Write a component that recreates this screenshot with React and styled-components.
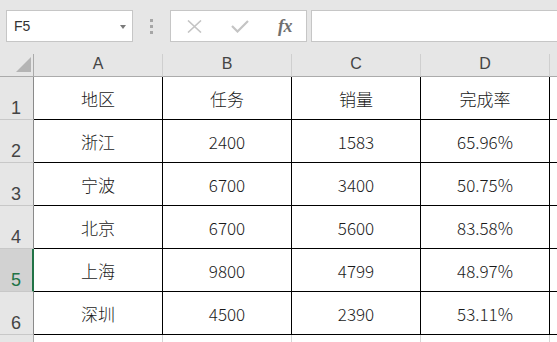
import React from "react";
import styled, { createGlobalStyle } from "styled-components";

const Global = createGlobalStyle`
  html, body { margin: 0; padding: 0; background: #e6e6e6; overflow: hidden; }
  #root { width: 557px; height: 342px; overflow: hidden; }
  * { box-sizing: border-box; }
`;

const Page = styled.div`
  width: 557px;
  height: 342px;
  display: flex;
  flex-direction: column;
  overflow: hidden;
  background: #e6e6e6;
`;

const Toolbar = styled.div`
  height: 54px;
  flex: none;
  display: flex;
  align-items: flex-start;
  padding: 10px 0 0 6px;
  background: #e6e6e6;
`;

const Field = styled.div`
  height: 32px;
  background: #fff;
  border: 1px solid #c6c6c6;
  display: flex;
  align-items: center;
`;

const NameBox = styled(Field)`
  width: 127px;
  padding: 0 6px 0 7px;
  justify-content: space-between;
  font-family: "Liberation Sans", Arial, sans-serif;
  font-size: 14px;
  color: #333;
`;

const Caret = styled.span`
  width: 0;
  height: 0;
  border-left: 3.5px solid transparent;
  border-right: 3.5px solid transparent;
  border-top: 4px solid #7a7a7a;
  margin-top: 1px;
`;

const Grip = styled.div`
  width: 37px;
  height: 32px;
  display: flex;
  flex-direction: column;
  align-items: center;
  justify-content: center;
  gap: 3px;
`;

const Dot = styled.span`
  width: 3px;
  height: 3px;
  background: #a6a6a6;
`;

const FxBox = styled(Field)`
  width: 137px;
  padding: 0 0 0 15px;
`;

const IconSlot = styled.span`
  width: ${(p) => p.$w}px;
  display: flex;
  align-items: center;
  justify-content: center;
`;

const FxText = styled.span`
  font-family: "Liberation Serif", "Times New Roman", serif;
  font-style: italic;
  font-weight: bold;
  font-size: 18px;
  color: #707070;
  letter-spacing: -0.5px;
`;

const FormulaInput = styled(Field)`
  flex: 1;
  margin-left: 4px;
  border-right: none;
`;

const Sheet = styled.div`
  display: grid;
  grid-template-columns: 34px repeat(4, 129px) 1fr;
  grid-template-rows: 23px repeat(6, 43px) 22px;
  background: #fff;
`;

const Corner = styled.div`
  background: #e6e6e6;
  border-right: 1px solid #ababab;
  border-bottom: 1px solid #ababab;
  display: flex;
  align-items: flex-end;
  justify-content: flex-end;
  padding: 0 2px 4px 0;
`;

const ColHead = styled.div`
  background: #e6e6e6;
  border-right: 1px solid #cfcfcf;
  border-bottom: 1px solid #ababab;
  display: flex;
  align-items: center;
  justify-content: center;
  padding-bottom: 2px;
  font-family: "Liberation Sans", Arial, sans-serif;
  font-size: 16px;
  color: #444;
`;

const RowHead = styled.div`
  background: ${(p) => (p.$active ? "#d2d2d2" : "#e6e6e6")};
  color: ${(p) => (p.$active ? "#217346" : "#444")};
  border-right: ${(p) => (p.$active ? "2px solid #217346" : "1px solid #8a8a8a")};
  border-bottom: 1px solid #c8c8c8;
  display: flex;
  align-items: flex-end;
  justify-content: center;
  padding: 0 ${(p) => (p.$active ? "0" : "1px")} 2px 0;
  font-family: "Liberation Sans", Arial, sans-serif;
  font-size: 18px;
  line-height: 18px;
  overflow: hidden;
`;

const LastRowHead = styled(RowHead)`
  align-items: flex-start;
  padding-top: 5px;
  border-right: 1px solid #ababab;
`;

const Cell = styled.div`
  border-right: 1px solid ${(p) => (p.$plain ? "#d4d4d4" : "#000")};
  border-bottom: 1px solid ${(p) => (p.$plain ? "#d4d4d4" : "#000")};
  display: flex;
  align-items: center;
  justify-content: center;
  font-family: "Noto Sans CJK SC", "Noto Sans", sans-serif;
  font-weight: 300;
  font-size: 17px;
  color: #1a1a1a;
  background: #fff;
`;

const EdgeCell = styled.div`
  border-bottom: 1px solid ${(p) => (p.$plain ? "#d4d4d4" : "#000")};
  background: #fff;
`;

const EdgeHead = styled.div`
  background: #e6e6e6;
  border-bottom: 1px solid #ababab;
`;

const cols = ["A", "B", "C", "D"];
const rows = [
  ["地区", "任务", "销量", "完成率"],
  ["浙江", "2400", "1583", "65.96%"],
  ["宁波", "6700", "3400", "50.75%"],
  ["北京", "6700", "5600", "83.58%"],
  ["上海", "9800", "4799", "48.97%"],
  ["深圳", "4500", "2390", "53.11%"],
];

const CrossIcon = () => (
  <svg width="15" height="13" viewBox="0 0 15 13">
    <path d="M1 0.5 L14 12.5 M14 0.5 L1 12.5" stroke="#c4c4c4" strokeWidth="1.6" fill="none" />
  </svg>
);

const CheckIcon = () => (
  <svg width="18" height="13" viewBox="0 0 18 13">
    <path d="M1 6 L6.5 11.5 L17 1" stroke="#c4c4c4" strokeWidth="2.2" fill="none" />
  </svg>
);

const CornerTriangle = () => (
  <svg width="15" height="15" viewBox="0 0 15 15">
    <polygon points="15,0 15,15 0,15" fill="#b4b4b4" />
  </svg>
);

export default function App() {
  return (
    <Page>
      <Global />
      <Toolbar>
        <NameBox>
          <span>F5</span>
          <Caret />
        </NameBox>
        <Grip>
          <Dot />
          <Dot />
          <Dot />
        </Grip>
        <FxBox>
          <IconSlot $w={16}>
            <CrossIcon />
          </IconSlot>
          <IconSlot $w={29} />
          <IconSlot $w={18}>
            <CheckIcon />
          </IconSlot>
          <IconSlot $w={27} />
          <IconSlot $w={18}>
            <FxText>fx</FxText>
          </IconSlot>
        </FxBox>
        <FormulaInput />
      </Toolbar>
      <Sheet>
        <Corner>
          <CornerTriangle />
        </Corner>
        {cols.map((c) => (
          <ColHead key={c}>{c}</ColHead>
        ))}
        <EdgeHead />
        {rows.map((r, i) => (
          <React.Fragment key={i}>
            <RowHead $active={i === 4}>{i + 1}</RowHead>
            {r.map((v, j) => (
              <Cell key={j}>{v}</Cell>
            ))}
            <EdgeCell />
          </React.Fragment>
        ))}
        <LastRowHead>7</LastRowHead>
        {cols.map((c) => (
          <Cell key={c} $plain />
        ))}
        <EdgeCell $plain />
      </Sheet>
    </Page>
  );
}
